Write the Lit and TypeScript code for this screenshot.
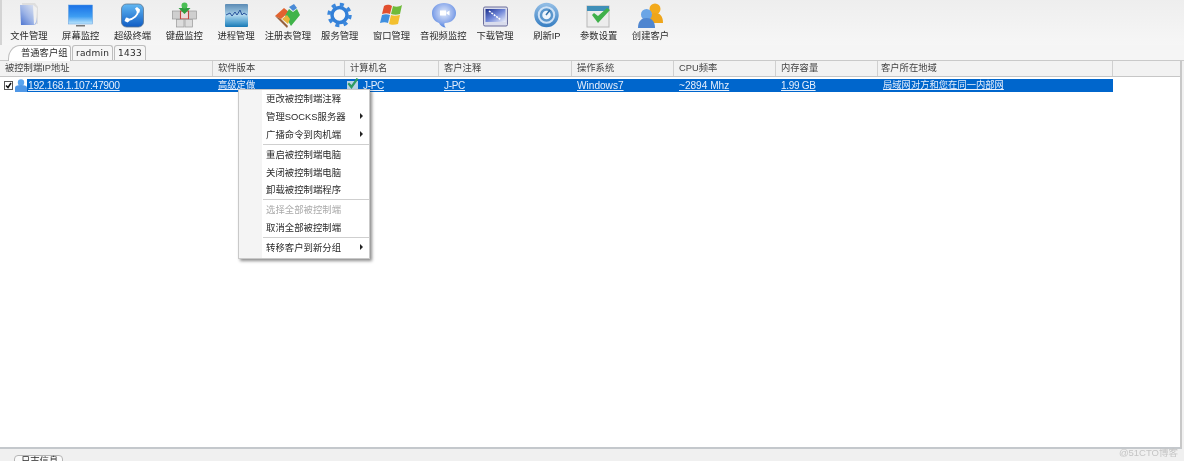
import { LitElement, html, css, svg } from "lit";
import { customElement } from "lit/decorators.js";

const icons = {
  file: svg`<defs><linearGradient id="f1" x1="1" y1="0" x2="0" y2="1"><stop offset="0" stop-color="#e6eaf2"/><stop offset=".55" stop-color="#9db4e6"/><stop offset="1" stop-color="#4a72cf"/></linearGradient></defs>
    <path d="M6 1h13l3 4v17H8z" fill="#dedede"/><path d="M4 3h14l3 17-2 3H5z" fill="url(#f1)"/><path d="M17 3l4 3-1 14-2 3z" fill="#f0f0f0"/>`,
  screen: svg`<defs><linearGradient id="s1" x1="0" y1="0" x2="0" y2="1"><stop offset="0" stop-color="#1a70e6"/><stop offset=".6" stop-color="#3d9df2"/><stop offset="1" stop-color="#bfe6fb"/></linearGradient></defs>
    <rect x="0.500" y="3" width="24" height="19" fill="url(#s1)" stroke="#5a9ade" stroke-width=".5"/><rect x="8" y="23" width="9" height="1.500" fill="#777"/>`,
  phone: svg`<defs><linearGradient id="p1" x1="0" y1="0" x2="0" y2="1"><stop offset="0" stop-color="#62b8f3"/><stop offset="1" stop-color="#0f5cc4"/></linearGradient></defs>
    <rect x="1.500" y="2" width="22" height="23" rx="5" fill="url(#p1)" stroke="#5d7690" stroke-width=".8"/>
    <path d="M18 9c0 4-4 8-10 9" fill="none" stroke="#fff" stroke-width="2"/>
    <path d="M15 6.500l2-1.500 3 2.500-.5 3-2 .5zM6 15.500l2.500.5 1 3-2 1.500-3-1.500z" fill="#fff"/>`,
  keyboard: svg`<rect x="0.500" y="9" width="8" height="8" fill="#cfcfcf" stroke="#979797" stroke-width=".7"/><rect x="16.500" y="9" width="8" height="8" fill="#cfcfcf" stroke="#979797" stroke-width=".7"/>
    <rect x="8.500" y="9" width="8" height="8" fill="#eadcdc" stroke="#c0453f" stroke-width="1.100"/><rect x="4.500" y="17.500" width="7.500" height="7.500" fill="#dcdcdc" stroke="#979797" stroke-width=".7"/><rect x="13" y="17.500" width="7.500" height="7.500" fill="#dcdcdc" stroke="#979797" stroke-width=".7"/>
    <path d="M10 2h5v4h3.500L12.500 12 6.500 6H10z" fill="#2f9e3f"/><circle cx="12.500" cy="3.500" r="3" fill="#4abf55"/>`,
  process: svg`<defs><linearGradient id="c1" x1="0" y1="0" x2="0" y2="1"><stop offset="0" stop-color="#5a8ab4"/><stop offset=".5" stop-color="#add5ec"/><stop offset=".8" stop-color="#4fa0d0"/><stop offset="1" stop-color="#1878b4"/></linearGradient></defs>
    <rect x="1" y="2" width="23" height="23" rx="1" fill="url(#c1)"/><path d="M2 13l4-2 2 3 3-4 2 3 3-5 2 5 2-2 3 2" fill="none" stroke="#28529c" stroke-width="1"/>`,
  registry: svg`<path d="M0 14L9 6l5 4-8 7z" fill="#e2622f"/><path d="M0 14l6 3 7 7-1 2z" fill="#96603e"/><path d="M10 14l4-7 4 3 4-3 3 6-9 11z" fill="#40b34a"/><path d="M14 5l5-3 3 4-4 3z" fill="#4a8ad6"/><path d="M7 17l5-4 3 4-2 5z" fill="#e9b23a"/>`,
  service: svg`<circle cx="12.500" cy="13" r="10.500" fill="none" stroke="#3b87dc" stroke-width="3.500" stroke-dasharray="4 4.250"/><circle cx="12.500" cy="13" r="7.500" fill="#f6f6f6" stroke="#3380d8" stroke-width="3.500"/>`,
  windows: svg`<path d="M5 4c3-2 6-1 8 0l-2 8c-2-1-5-1-8 0z" fill="#e2502f"/><path d="M14 4c3 1 6 1 9-1l-2 9c-3 1-6 1-9 0z" fill="#6fbb3a"/><path d="M3 13c3-1 5-1 8 0l-2 8c-2-1-5-1-8 0z" fill="#3f8fe0"/><path d="M12 13c2 1 5 1 9 0l-2 9c-3 1-7 1-9 0z" fill="#f3c02f"/>`,
  video: svg`<defs><radialGradient id="v1" cx=".5" cy=".4" r=".7"><stop offset="0" stop-color="#e4ecfb"/><stop offset=".6" stop-color="#8aa8ea"/><stop offset="1" stop-color="#2f6ed8"/></radialGradient></defs>
    <path d="M13 1c6.500 0 12 4 12 10s-5 10-11 10c-1 0-1 3 1 4.500-3 0-6-2-7-4.500C3.500 19.500 1 16 1 11 1 5 6.500 1 13 1z" fill="url(#v1)"/><path d="M9 8.500h6v5H9zM15.500 10.500l3-2v5l-3-2z" fill="#fff"/>`,
  download: svg`<defs><linearGradient id="d1" x1="0" y1="0" x2="1" y2="1"><stop offset="0" stop-color="#1c2f8c"/><stop offset=".5" stop-color="#6f86d8"/><stop offset="1" stop-color="#eef1fb"/></linearGradient></defs>
    <rect x="0.500" y="5" width="24" height="19" rx="1.500" fill="#d9dcec" stroke="#6d6f9c"/><rect x="2.500" y="7" width="20" height="13" fill="url(#d1)"/><path d="M6 9l12 9" stroke="#fff" stroke-width="1.500" stroke-dasharray="2 1"/>`,
  refresh: svg`<defs><linearGradient id="r1" x1="0" y1="0" x2="0" y2="1"><stop offset="0" stop-color="#8fbbe4"/><stop offset="1" stop-color="#3c82c4"/></linearGradient></defs>
    <circle cx="12.500" cy="13" r="10.500" fill="#cfe2f6" stroke="url(#r1)" stroke-width="3.500"/><circle cx="12.500" cy="13" r="5.500" fill="#eef5fb" stroke="#5a96cc" stroke-width="2.500"/><path d="M12 13l4-5" stroke="#2f6fa8" stroke-width="1.500"/>`,
  settings: svg`<rect x="1" y="4" width="22" height="21" fill="#ececec" stroke="#b8b8b8"/><rect x="1" y="4" width="22" height="5" fill="#3f8fb8"/><path d="M6 13l2-2 4 3 9-8 3 2-12 13z" fill="#3fb04a"/>`,
  users: svg`<circle cx="17" cy="7" r="5.500" fill="#f3aa1c"/><path d="M9 21c0-7 3-10 8-10s8 3 8 10z" fill="#eea51a"/><circle cx="8.500" cy="12.500" r="5.500" fill="#6aa5e6"/><path d="M0 26c0-7 3.500-10 8.500-10s8.500 3 8.500 10z" fill="#4f86d0"/>`,
};

const tools = [
  ["文件管理", "file"], ["屏幕监控", "screen"], ["超级终端", "phone"], ["键盘监控", "keyboard"],
  ["进程管理", "process"], ["注册表管理", "registry"], ["服务管理", "service"], ["窗口管理", "windows"],
  ["音视频监控", "video"], ["下载管理", "download"], ["刷新IP", "refresh"], ["参数设置", "settings"], ["创建客户", "users"],
] as const;

const columns = ["被控制端IP地址", "软件版本", "计算机名", "客户注释", "操作系统", "CPU频率", "内存容量", "客户所在地域"];

@customElement("app-root")
export class AppRoot extends LitElement {
  static styles = css`
    :host {
      display: flex;
      flex-direction: column;
      position: relative;
      width: 1184px;
      height: 461px;
      overflow: hidden;
      background: #f1f1f1;
      font-family: "Liberation Sans", "Noto Sans CJK SC", sans-serif;
      font-size: 9.3px;
      color: #2a2a2a;
      filter: blur(0.4px);
    }
    .toolbar {
      display: grid;
      grid-template-columns: repeat(13, 51.8px);
      height: 45px;
      padding-left: 2px;
      border-left: 2px solid #d4d4d4;
      box-sizing: border-box;
      background: linear-gradient(#eeeeee, #f6f6f6);
    }
    .tool {
      display: flex;
      flex-direction: column;
      align-items: center;
      margin-left: -2px;
      white-space: nowrap;
    }
    .tool svg {
      width: 25px;
      height: 26px;
      margin-top: 2px;
      margin-bottom: 1px;
    }
    .tool span {
      line-height: 14px;
    }
    .tabs {
      display: flex;
      align-items: flex-end;
      height: 16px;
      padding-left: 8px;
      box-sizing: border-box;
      background: #f5f5f5;
      border-bottom: 1px solid #c9c9c9;
    }
    .tab {
      height: 15px;
      line-height: 14px;
      padding: 0 3px;
      margin-left: 1px;
      border: 1px solid #bdbdbd;
      border-bottom: none;
      border-radius: 3px 3px 0 0;
      box-sizing: border-box;
      background: #f6f6f6;
      letter-spacing: 0.2px;
      font-family: "DejaVu Sans", "Noto Sans CJK SC", sans-serif;
      font-size: 9px;
    }
    .tab.active {
      width: 63px;
      height: 16px;
      margin: 0 0 -1px 0;
      padding: 0 0 0 12px;
      white-space: nowrap;
      background: #fff;
      border-top-left-radius: 12px 14px;
      font-family: inherit;
      font-size: 9.3px;
      letter-spacing: 0;
    }
    .list {
      flex: 1;
      margin-right: 2px;
      background: #fff;
      border-right: 2px solid #c8c8c8;
      border-bottom: 2px solid #c4c8cc;
    }
    .cols {
      display: grid;
      grid-template-columns: 213px 132px 94px 133px 102px 102px 102px 235px 1fr;
    }
    .head {
      height: 16px;
      line-height: 15px;
      box-sizing: border-box;
      background: #f2f2f2;
      border-bottom: 1px solid #c6c6c6;
      color: #444;
    }
    .head div {
      padding-left: 5px;
      border-right: 1px solid #d0d0d0;
      white-space: nowrap;
    }
    .head div:nth-child(8) {
      padding-left: 3px;
    }
    .row {
      display: flex;
      align-items: center;
      height: 13px;
      margin-top: 2px;
      position: relative;
    }
    .check {
      width: 9px;
      height: 9px;
      margin-left: 4px;
      border: 1px solid #555;
      box-sizing: border-box;
      background: #fff;
    }
    .check svg {
      display: block;
      width: 7px;
      height: 7px;
    }
    .user {
      width: 12px;
      height: 13px;
      margin-left: 2px;
      flex: none;
    }
    .cells {
      width: 1086px;
      height: 13px;
      line-height: 13px;
      background: #0066cc;
      color: #fff;
      display: grid;
      grid-template-columns: 186px 132px 94px 133px 102px 102px 102px 235px;
    }
    .cells a {
      padding-left: 5px;
      text-decoration: underline;
      white-space: nowrap;
      display: block;
      color: #e6effc;
    }
    .cells a.ip {
      padding-left: 1px;
      font-size: 10.3px;
      letter-spacing: -0.3px;
    }
    .cells a.num {
      font-size: 10.1px;
    }
    .cells a.tight {
      font-size: 10px;
      letter-spacing: -0.3px;
    }
    .name {
      display: flex;
      align-items: flex-start;
      gap: 4px;
      padding-left: 1px;
    }
    .name a {
      padding-left: 0;
    }
    .name svg {
      width: 13px;
      height: 14px;
      margin-top: -2px;
      flex: none;
    }
    .menu {
      position: absolute;
      left: 238px;
      top: 89px;
      width: 132px;
      height: 170px;
      box-sizing: border-box;
      background: linear-gradient(90deg, #f4f4f4 23px, #fff 23px);
      border: 1px solid #c9c9c9;
      box-shadow: 2px 2px 3px rgba(0, 0, 0, 0.45);
    }
    .item {
      display: flex;
      justify-content: space-between;
      align-items: center;
      height: 17.8px;
      box-sizing: border-box;
      padding: 0 6px 1px 27px;
      font-size: 9.4px;
    }
    .item.off {
      color: #aaa;
    }
    .arrow {
      width: 0;
      height: 0;
      border-left: 3px solid #222;
      border-top: 3px solid transparent;
      border-bottom: 3px solid transparent;
    }
    .sep {
      height: 1px;
      margin: 0.5px 0 0.5px 24px;
      background: #cfcfcf;
    }
    .foot {
      height: 12px;
      padding-left: 14px;
      background: #f0f0f0;
    }
    .log {
      display: inline-block;
      width: 49px;
      height: 12px;
      margin-top: 6px;
      padding-left: 6px;
      box-sizing: border-box;
      background: #fafafa;
      border: 1px solid #b5b5b5;
      border-radius: 4px 4px 0 0;
      line-height: 10px;
    }
    .mark {
      position: absolute;
      right: 6px;
      bottom: 2px;
      color: #c4c4c4;
      font-size: 9.5px;
    }
  `;

  menuItem(label: string, more = false, off = false) {
    return html`<div class="item ${off ? "off" : ""}"><span>${label}</span>${more ? html`<i class="arrow"></i>` : ""}</div>`;
  }

  render() {
    return html`
      <div class="toolbar">
        ${tools.map(([label, icon]) => html`
          <div class="tool">
            <svg viewBox="0 0 25 26">${icons[icon]}</svg>
            <span>${label}</span>
          </div>`)}
      </div>
      <div class="tabs">
        <div class="tab active">普通客户组</div>
        <div class="tab">radmin</div>
        <div class="tab">1433</div>
      </div>
      <div class="list">
        <div class="cols head">
          ${columns.map((c) => html`<div>${c}</div>`)}
        </div>
        <div class="row">
          <div class="check"><svg viewBox="0 0 7 7"><path d="M1 3.500l2 2 3-4.500" fill="none" stroke="#111" stroke-width="1.500"/></svg></div>
          <svg class="user" viewBox="0 0 12 13"><circle cx="6" cy="3.500" r="3.200" fill="#5aa4ee"/><path d="M0 13V8.500c0-1.500 2-2.500 6-2.500s6 1 6 2.500V13z" fill="#4f97e6"/></svg>
          <div class="cells">
            <a class="ip">192.168.1.107:47900</a>
            <a>高级定做</a>
            <div class="name">
              <svg viewBox="0 0 13 14"><path d="M1 4h11v10H1z" fill="#b9d2e6"/><path d="M1.500 7l4 5 7-10-2-1-5 7-2.500-2.500z" fill="#2e9a62"/></svg>
              <a class="tight">J-PC</a>
            </div>
            <a class="tight">J-PC</a>
            <a class="num">Windows7</a>
            <a class="num">~2894 Mhz</a>
            <a class="tight">1.99 GB</a>
            <a>局域网对方和您在同一内部网</a>
          </div>
        </div>
      </div>
      <div class="foot"><span class="log">日志信息</span></div>
      <div class="mark">@51CTO博客</div>
      <div class="menu">
        ${this.menuItem("更改被控制端注释")}
        ${this.menuItem("管理SOCKS服务器", true)}
        ${this.menuItem("广播命令到肉机端", true)}
        <div class="sep"></div>
        ${this.menuItem("重启被控制端电脑")}
        ${this.menuItem("关闭被控制端电脑")}
        ${this.menuItem("卸载被控制端程序")}
        <div class="sep"></div>
        ${this.menuItem("选择全部被控制端", false, true)}
        ${this.menuItem("取消全部被控制端")}
        <div class="sep"></div>
        ${this.menuItem("转移客户到新分组", true)}
      </div>
    `;
  }
}
